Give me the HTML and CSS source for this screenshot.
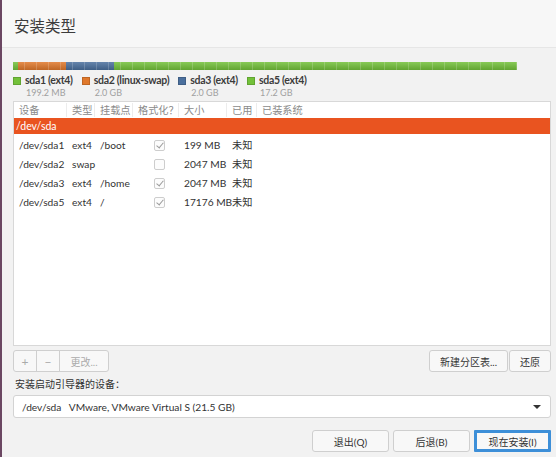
FILE: index.html
```html
<!DOCTYPE html>
<html lang="zh-CN">
<head>
    <meta charset="UTF-8">
    <meta name="viewport" content="width=device-width, initial-scale=1.0">
    <title>安装类型</title>
    <link rel="stylesheet" href="styles.css">
</head>
<body>
<div class="window">
    <header class="titlebar">
        <h1>安装类型</h1>
    </header>

    <main class="content">
        <!-- disk usage bar -->
        <div class="diskbar">
            <span class="seg green" style="width:5px"></span>
            <span class="seg orange" style="width:48px"></span>
            <span class="seg blue" style="width:48px"></span>
            <span class="seg green grow"></span>
        </div>

        <div class="legend">
            <div class="legend-item">
                <div class="legend-name"><span class="swatch green"></span>sda1 (ext4)</div>
                <div class="legend-size">199.2 MB</div>
            </div>
            <div class="legend-item">
                <div class="legend-name"><span class="swatch orange"></span>sda2 (linux-swap)</div>
                <div class="legend-size">2.0 GB</div>
            </div>
            <div class="legend-item">
                <div class="legend-name"><span class="swatch blue"></span>sda3 (ext4)</div>
                <div class="legend-size">2.0 GB</div>
            </div>
            <div class="legend-item">
                <div class="legend-name"><span class="swatch green"></span>sda5 (ext4)</div>
                <div class="legend-size">17.2 GB</div>
            </div>
        </div>

        <div class="parts">
            <div class="row head">
                <span>设备</span><span>类型</span><span>挂载点</span><span>格式化？</span><span>大小</span><span>已用</span><span>已装系统</span>
            </div>
            <div class="row disk">/dev/sda</div>
            <div class="row">
                <span>/dev/sda1</span><span>ext4</span><span>/boot</span><span class="fmt"><i class="check on"></i></span><span>199 MB</span><span>未知</span><span></span>
            </div>
            <div class="row">
                <span>/dev/sda2</span><span>swap</span><span></span><span class="fmt"><i class="check"></i></span><span>2047 MB</span><span>未知</span><span></span>
            </div>
            <div class="row">
                <span>/dev/sda3</span><span>ext4</span><span>/home</span><span class="fmt"><i class="check on"></i></span><span>2047 MB</span><span>未知</span><span></span>
            </div>
            <div class="row">
                <span>/dev/sda5</span><span>ext4</span><span>/</span><span class="fmt"><i class="check on"></i></span><span>17176 MB</span><span>未知</span><span></span>
            </div>
        </div>

        <div class="toolbar">
            <div class="btn-group">
                <button class="btn small" disabled>+</button>
                <button class="btn small" disabled>−</button>
                <button class="btn" disabled>更改...</button>
            </div>
            <div class="right">
                <button class="btn new-table">新建分区表...</button>
                <button class="btn revert">还原</button>
            </div>
        </div>

        <label class="boot-label">安装启动引导器的设备：</label>
        <div class="combo">
            <span>/dev/sda&nbsp;&nbsp;&nbsp;VMware, VMware Virtual S (21.5 GB)</span>
            <span class="arrow"></span>
        </div>

        <div class="actions">
            <button class="btn wide">退出(Q)</button>
            <button class="btn wide">后退(B)</button>
            <button class="btn wide focus">现在安装(I)</button>
        </div>
    </main>
</div>
</body>
</html>
```

FILE: styles.css
```css
body {
    margin: 0;
    background: #f2f2f2;
    font-family: "Lato", "Noto Sans CJK SC", sans-serif;
    color: #333;
}

.window {
    height: 457px;
    border-left: 2px solid #6b4762;
    display: flex;
    flex-direction: column;
    box-sizing: border-box;
}

.titlebar {
    height: 48px;
    background: #f7f7f7;
    border-bottom: 1px solid #e6e6e6;
    box-sizing: border-box;
    padding-left: 12px;
}
.titlebar h1 {
    margin: 0;
    padding-top: 15px;
    font-size: 15.5px;
    line-height: 22px;
    font-weight: normal;
    color: #3c3c3c;
}

.content {
    flex: 1;
    display: flex;
    flex-direction: column;
    padding: 14px 5px 5px 11px;
}

/* disk bar */
.diskbar {
    display: flex;
    width: 504px;
    height: 8px;
    position: relative;
}
.diskbar::after {
    content: '';
    position: absolute;
    inset: 0;
    background:
        repeating-linear-gradient(90deg, transparent 0 11px, rgba(255,255,255,0.18) 11px 12px),
        linear-gradient(rgba(255,255,255,0.15), rgba(0,0,0,0.15));
}
.seg.grow { flex: 1; }
.green { background: #73c13a; }
.orange { background: #e0782b; }
.blue { background: #4a6f9d; }

.legend {
    display: flex;
    height: 27px;
    margin-top: 3px;
}
.legend-item { margin-right: 9px; }
.legend-name {
    font-size: 10.5px;
    font-weight: bold;
    letter-spacing: -0.3px;
    color: #3c3c3c;
    display: flex;
    align-items: center;
    line-height: 15px;
}
.swatch {
    width: 8px;
    height: 8px;
    margin-right: 4px;
    border: 1px solid rgba(0,0,0,0.15);
    box-sizing: border-box;
}
.legend-size {
    font-size: 9px;
    color: #a0a0a0;
    padding-left: 13px;
    line-height: 10px;
}

/* partition list */
.parts {
    height: 245px;
    margin-top: 1px;
    background: #fff;
    border: 1px solid #d8d8d8;
    box-sizing: border-box;
    font-size: 10.2px;
}
.row {
    display: grid;
    grid-template-columns: 53px 28px 38px 46px 48px 30px 1fr;
    height: 19px;
    align-items: center;
}
.row span { padding-left: 5px; white-space: nowrap; }
.row.head {
    height: 16px;
    color: #8a8a8a;
}
.row.head span { border-right: 1px solid #ececec; line-height: 14px; }
.row.head span:last-child { border-right: none; }
.row.disk {
    display: block;
    height: 16px;
    line-height: 16px;
    background: #e95420;
    color: #fff;
    padding-left: 2px;
    margin-bottom: 1px;
    font-size: 10.5px;
}
.row .fmt { padding-left: 6px; text-align: center; }
.check {
    display: inline-block;
    width: 11px;
    height: 11px;
    border: 1px solid #cdcdcd;
    border-radius: 2px;
    box-sizing: border-box;
    vertical-align: middle;
    position: relative;
    background: #fcfcfc;
}
.check.on::after {
    content: '';
    position: absolute;
    left: 3px;
    top: 0;
    width: 3px;
    height: 6px;
    border: solid #9a9a9a;
    border-width: 0 1px 1px 0;
    transform: rotate(40deg);
}

/* buttons */
.btn {
    font-family: inherit;
    font-size: 10px;
    color: #333;
    height: 22px;
    padding: 0 8px;
    background: #f8f8f8;
    border: 1px solid #cfcfcf;
    border-radius: 3px;
    white-space: nowrap;
}
.btn:disabled { color: #aaa; }

.toolbar {
    display: flex;
    justify-content: space-between;
    margin-top: 4px;
}
.btn-group { display: flex; }
.btn-group .btn { border-radius: 0; margin-left: -1px; }
.btn-group .btn:first-child { border-radius: 3px 0 0 3px; margin-left: 0; }
.btn-group .btn:last-child { border-radius: 0 3px 3px 0; width: 50px; padding: 0; }
.btn.small { width: 24px; padding: 0; font-size: 12px; }
.right { display: flex; gap: 1px; }
.btn.new-table { width: 79px; padding: 0; }
.btn.revert { width: 42px; padding: 0; }

.boot-label {
    font-size: 10px;
    margin-top: 4px;
    line-height: 16px;
    padding-left: 2px;
}

.combo {
    margin-top: 3px;
    height: 23px;
    background: #fff;
    border: 1px solid #d3d3d3;
    border-radius: 3px;
    box-sizing: border-box;
    display: flex;
    align-items: center;
    justify-content: space-between;
    padding: 0 9px 0 8px;
    font-size: 10.2px;
}
.arrow {
    width: 0;
    height: 0;
    border-left: 4px solid transparent;
    border-right: 4px solid transparent;
    border-top: 4px solid #333;
}

.actions {
    margin-top: auto;
    display: flex;
    justify-content: flex-end;
    gap: 4px;
}
.btn.wide { width: 77px; padding: 0; }
.btn.focus {
    border: 3px solid #3d8fd8;
    border-radius: 1px;
}
```
